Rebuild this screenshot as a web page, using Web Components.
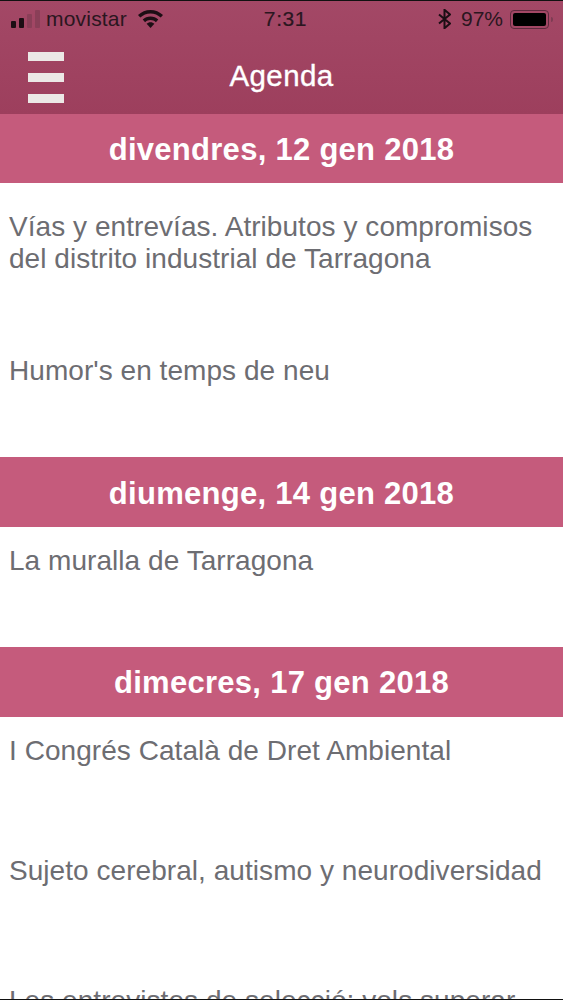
<!DOCTYPE html>
<html>
<head>
<meta charset="utf-8">
<title>Agenda</title>
<style>
  html, body { margin: 0; padding: 0; background: #fff; }
  body { width: 563px; height: 1000px; overflow: hidden; position: relative; font-family: "Liberation Sans", Arial, sans-serif; }
  .edge { position: absolute; left: 0; right: 0; height: 1px; background: #111; z-index: 5; }
</style>
</head>
<body>
<div class="edge" style="top:0"></div>
<div class="edge" style="bottom:0"></div>
<app-header title="Agenda"></app-header>
<day-header>divendres, 12 gen 2018</day-header>
<agenda-row wrapped>Vías y entrevías. Atributos y compromisos del distrito industrial de Tarragona</agenda-row>
<agenda-row>Humor's en temps de neu</agenda-row>
<day-header>diumenge, 14 gen 2018</day-header>
<agenda-row>La muralla de Tarragona</agenda-row>
<day-header>dimecres, 17 gen 2018</day-header>
<agenda-row>I Congrés Català de Dret Ambiental</agenda-row>
<agenda-row>Sujeto cerebral, autismo y neurodiversidad</agenda-row>
<agenda-row wrapped>Les entrevistes de selecció: vols superar</agenda-row>
<script>
customElements.define(
  "status-bar",
  class extends HTMLElement {
    constructor() {
      super();
      const shadowRoot = this.attachShadow({ mode: "open" });
      shadowRoot.innerHTML = `
<style>
  :host {
    display: flex;
    align-items: center;
    height: 38px;
    padding: 0 10px 0 11px;
    color: #2a1620;
    font-size: 21px;
    font-family: "Liberation Sans", Arial, sans-serif;
  }
  .left, .right { display: flex; align-items: center; flex: 1; }
  .right { justify-content: flex-end; }
  .signal { display: flex; align-items: flex-end; gap: 3px; height: 18px; margin: 0 6px 0 0; }
  .signal i { width: 5px; background: #1c0e14; border-radius: 1px; }
  .signal i.off { background: #8a3f58; }
  .carrier { letter-spacing: 0.2px; }
  .wifi { margin-left: 11px; }
  .time { margin-left: 7px; font-size: 21px; letter-spacing: 0.6px; -webkit-text-stroke: 0.2px currentColor; }
  .bt { margin-right: 10px; }
  .batt { display: flex; align-items: center; margin-left: 7px; }
  .shell { width: 39px; height: 19px; box-sizing: border-box; border: 1px solid #5e2a3e; border-radius: 4px; padding: 2px; }
  .fill { height: 100%; background: #000; border-radius: 2px; }
  .nub { width: 2px; height: 5px; margin-left: 2px; background: #7d3c53; border-radius: 0 2px 2px 0; }
</style>
<div class="left">
  <div class="signal">
    <i style="height:7px"></i><i style="height:10px"></i><i class="off" style="height:14px"></i><i class="off" style="height:18px"></i>
  </div>
  <span class="carrier">movistar</span>
  <svg class="wifi" width="25" height="18" viewBox="0 0 25 18" fill="#1c0e14">
    <path d="M12.5 0C7.7 0 3.4 1.9 0 5l2.3 2.6C5 5.100 8.600 3.500 12.500 3.500s7.500 1.600 10.200 4.100L25 5C21.600 1.900 17.300 0 12.500 0z"/>
    <path d="M12.500 6.500c-3 0-5.700 1.100-7.800 3l2.400 2.700c1.400-1.300 3.300-2.100 5.400-2.100s4 .8 5.400 2.100l2.400-2.700c-2.100-1.900-4.800-3-7.800-3z"/>
    <path d="M12.500 18l-3.900-4.300c1-.9 2.400-1.500 3.900-1.500s2.900.6 3.900 1.500z"/>
  </svg>
</div>
<span class="time">7:31</span>
<div class="right">
  <svg class="bt" width="13" height="20" viewBox="0 0 13 20" fill="none" stroke="#1c0e14" stroke-width="2">
    <path d="M1 5.500l11 9-5.500 4.700V.8l5.500 4.700-11 9"/>
  </svg>
  <span>97%</span>
  <div class="batt"><div class="shell"><div class="fill"></div></div><div class="nub"></div></div>
</div>
`;
    }
  }
);

customElements.define(
  "app-header",
  class extends HTMLElement {
    constructor() {
      super();
      const shadowRoot = this.attachShadow({ mode: "open" });
      shadowRoot.innerHTML = `
<style>
  :host {
    display: block;
    height: 113.5px;
    background: linear-gradient(#a34866, #9d3f5d);
    color: #fff;
    font-family: "Liberation Sans", Arial, sans-serif;
  }
  .nav { display: flex; align-items: center; justify-content: center; height: 75.5px; position: relative; }
  h1 { margin: 0; font-size: 29.5px; font-weight: 400; letter-spacing: 0.4px; -webkit-text-stroke: 0.35px currentColor; }
  .menu { position: absolute; left: 28px; top: 14px; display: flex; flex-direction: column; gap: 12px; }
  .menu i { display: block; width: 36px; height: 9px; background: #ece8e6; }
</style>
<status-bar></status-bar>
<div class="nav">
  <div class="menu"><i></i><i></i><i></i></div>
  <h1></h1>
</div>
`;
      shadowRoot.querySelector("h1").textContent = this.getAttribute("title");
    }
  }
);

customElements.define(
  "day-header",
  class extends HTMLElement {
    constructor() {
      super();
      const shadowRoot = this.attachShadow({ mode: "open" });
      shadowRoot.innerHTML = `
<style>
  :host {
    display: flex;
    align-items: center;
    justify-content: center;
    box-sizing: border-box;
    height: 69.8px;
    padding-top: 3px;
    background: #c55b7c;
    color: #fff;
    font-family: "Liberation Sans", Arial, sans-serif;
    font-size: 31px;
    font-weight: 700;
    letter-spacing: 0.28px;
  }
</style>
<slot></slot>
`;
    }
  }
);

customElements.define(
  "agenda-row",
  class extends HTMLElement {
    constructor() {
      super();
      const shadowRoot = this.attachShadow({ mode: "open" });
      shadowRoot.innerHTML = `
<style>
  :host {
    display: block;
    box-sizing: border-box;
    height: 120px;
    padding: 18px 9px 0;
    background: #fff;
    color: #6d6d72;
    font-family: "Liberation Sans", Arial, sans-serif;
    font-size: 28px;
    letter-spacing: 0.05px;
    line-height: 32px;
  }
  :host([wrapped]) { height: 154px; padding-top: 28px; }
</style>
<slot></slot>
`;
    }
  }
);
</script>
</body>
</html>
